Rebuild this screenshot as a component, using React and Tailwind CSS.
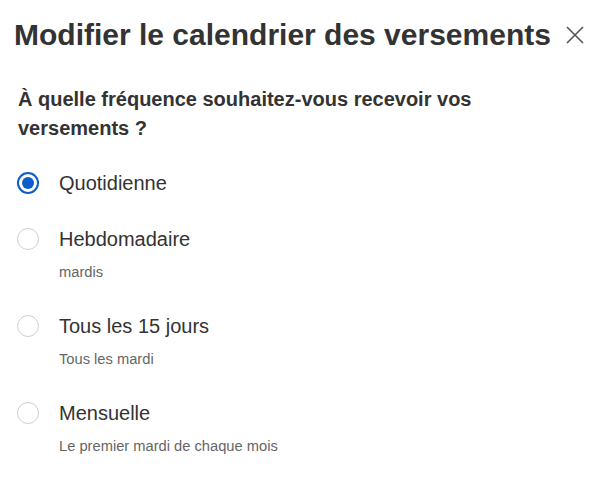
import React, { useState } from "react";

const options = [
  { id: "q", label: "Quotidienne", sub: null },
  { id: "h", label: "Hebdomadaire", sub: "mardis" },
  { id: "t", label: "Tous les 15 jours", sub: "Tous les mardi" },
  { id: "m", label: "Mensuelle", sub: "Le premier mardi de chaque mois" },
];

export default function App() {
  const [sel, setSel] = useState("q");
  return (
    <div className="w-[591px] h-[479px] bg-white text-[#333333] font-['Liberation_Sans',Arial,sans-serif]">
      <div className="flex items-start justify-between pl-[14px] pr-[6px] pt-[16px]">
        <h1 className="text-[30px] leading-[38px] font-bold">
          Modifier le calendrier des versements
        </h1>
        <button className="mt-[9px] w-[20px] h-[20px] flex items-center justify-center text-[#555]">
          <svg width="18" height="18" viewBox="0 0 18 18" fill="none" stroke="currentColor" strokeWidth="1.6">
            <path d="M1 1L17 17M17 1L1 17" />
          </svg>
        </button>
      </div>
      <p className="mt-[31px] pl-[18px] pr-[40px] text-[20px] leading-[29px] font-bold">
        À quelle fréquence souhaitez-vous recevoir vos versements ?
      </p>
      <div className="mt-[29px] flex flex-col pl-[17px]">
        {options.map((o) => (
          <label key={o.id} className="flex flex-col cursor-pointer mb-[34px]" onClick={() => setSel(o.id)}>
            <div className="flex items-center h-[22px]">
              <span
                className={
                  sel === o.id
                    ? "w-[22px] h-[22px] rounded-full border-2 border-[#0b5ec9] flex items-center justify-center"
                    : "w-[22px] h-[22px] rounded-full border border-[#cfcfcf] flex items-center justify-center"
                }
              >
                {sel === o.id && <span className="w-[12px] h-[12px] rounded-full bg-[#0b5ec9]" />}
              </span>
              <span className="ml-[20px] text-[20px] leading-[22px]">{o.label}</span>
            </div>
            {o.sub && (
              <span className="ml-[42px] mt-[13px] text-[14.7px] leading-[18px] text-[#666]">{o.sub}</span>
            )}
          </label>
        ))}
      </div>
    </div>
  );
}
